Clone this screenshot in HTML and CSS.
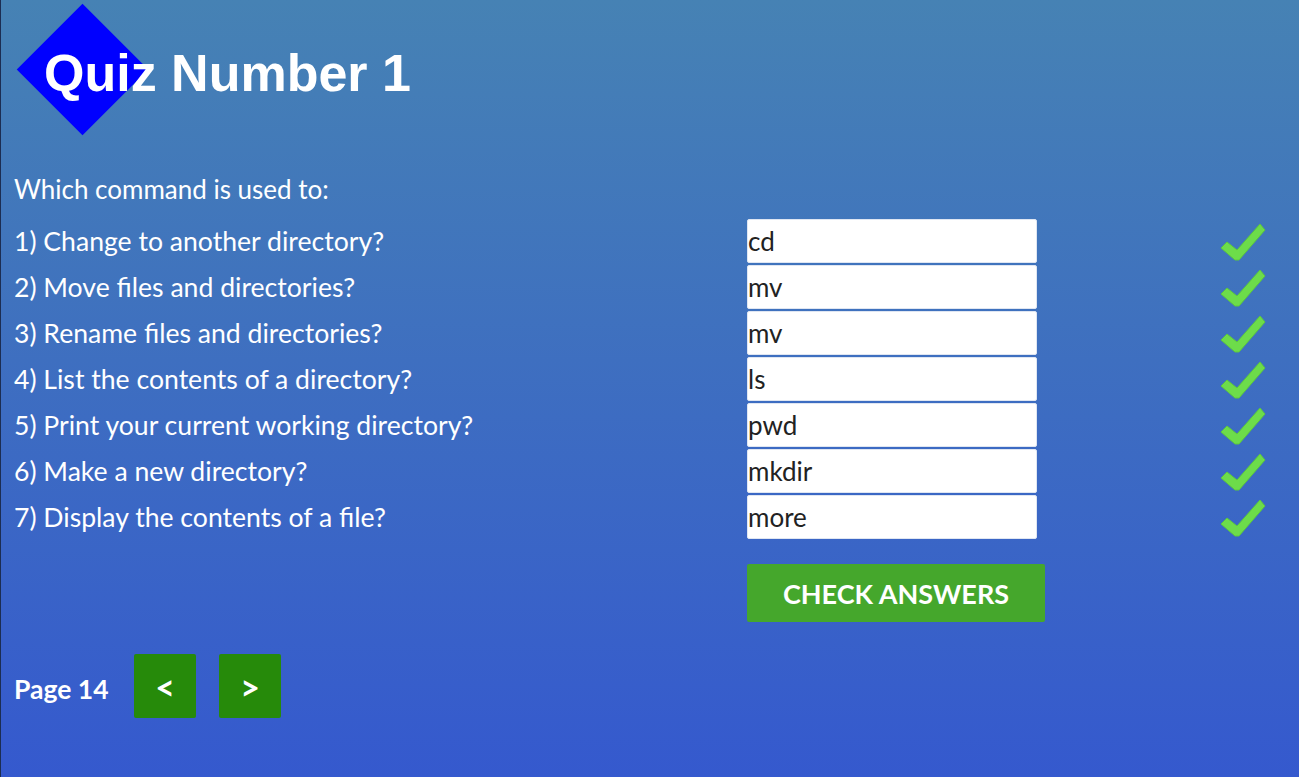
FILE: index.html
```html
<!DOCTYPE html>
<html lang="en">
<head>
<meta charset="utf-8">
<title>Quiz Number 1</title>
<link rel="stylesheet" href="styles.css">
</head>
<body>
<div class="page">
  <header class="header">
    <div class="diamond"></div>
    <h1 class="title">Quiz Number 1</h1>
  </header>

  <p class="intro">Which command is used to:</p>

  <div class="quiz">
    <div class="question">1) Change to another directory?</div>
    <input class="answer" type="text" value="cd">
    <svg class="tick" viewBox="0 0 48 42"><polygon points="2,27 8,21 18,29 41,3 46,9 20,39 16,39"/></svg>

    <div class="question">2) Move files and directories?</div>
    <input class="answer" type="text" value="mv">
    <svg class="tick" viewBox="0 0 48 42"><polygon points="2,27 8,21 18,29 41,3 46,9 20,39 16,39"/></svg>

    <div class="question">3) Rename files and directories?</div>
    <input class="answer" type="text" value="mv">
    <svg class="tick" viewBox="0 0 48 42"><polygon points="2,27 8,21 18,29 41,3 46,9 20,39 16,39"/></svg>

    <div class="question">4) List the contents of a directory?</div>
    <input class="answer" type="text" value="ls">
    <svg class="tick" viewBox="0 0 48 42"><polygon points="2,27 8,21 18,29 41,3 46,9 20,39 16,39"/></svg>

    <div class="question">5) Print your current working directory?</div>
    <input class="answer" type="text" value="pwd">
    <svg class="tick" viewBox="0 0 48 42"><polygon points="2,27 8,21 18,29 41,3 46,9 20,39 16,39"/></svg>

    <div class="question">6) Make a new directory?</div>
    <input class="answer" type="text" value="mkdir">
    <svg class="tick" viewBox="0 0 48 42"><polygon points="2,27 8,21 18,29 41,3 46,9 20,39 16,39"/></svg>

    <div class="question">7) Display the contents of a file?</div>
    <input class="answer" type="text" value="more">
    <svg class="tick" viewBox="0 0 48 42"><polygon points="2,27 8,21 18,29 41,3 46,9 20,39 16,39"/></svg>

    <div class="spacer"></div>
    <button class="check" type="button">CHECK ANSWERS</button>
  </div>

  <nav class="pager">
    <span class="page-label">Page 14</span>
    <button class="nav-btn" type="button">&lt;</button>
    <button class="nav-btn" type="button">&gt;</button>
  </nav>
</div>
</body>
</html>
```

FILE: styles.css
```css
html, body {
  margin: 0;
  padding: 0;
  height: 100%;
}

body {
  background: linear-gradient(to bottom, #4682b4 0%, #3559ce 100%);
  font-family: Lato, "Open Sans", sans-serif;
  color: #fff;
  overflow: hidden;
}

.page {
  min-height: 100%;
  box-sizing: border-box;
  border-left: 1px solid #1c2d52;
  padding: 0 0 0 13px;
}

.header {
  position: relative;
  height: 140px;
  display: flex;
  align-items: center;
  padding-left: 30px;
}

.diamond {
  position: absolute;
  left: 22px;
  top: 23px;
  width: 93px;
  height: 93px;
  background: #0000ff;
  transform: rotate(45deg);
}

.title {
  position: relative;
  margin: 0;
  padding-top: 6px;
  font-family: "Liberation Sans", Arial, sans-serif;
  font-weight: bold;
  font-size: 52px;
  color: #fff;
}

.intro {
  margin: 26px 0 0 0;
  height: 46px;
  line-height: 46px;
  font-size: 26px;
}

.quiz {
  margin-top: 7px;
  display: grid;
  grid-template-columns: 733px 290px 182px 48px;
  grid-auto-rows: 44px;
  row-gap: 2px;
  align-items: center;
}

.question {
  font-size: 26.6px;
  line-height: 44px;
}

.answer {
  box-sizing: border-box;
  width: 290px;
  height: 44px;
  margin: 0;
  padding: 0;
  border: 1px solid #dfe6f2;
  border-radius: 2px;
  background: #fff;
  font-family: Lato, "Open Sans", sans-serif;
  font-size: 26px;
  color: #222;
  outline: none;
}

.tick {
  grid-column: 4;
  width: 48px;
  height: 42px;
  align-self: start;
  margin-top: 2px;
}

.tick polygon {
  fill: #6ddc4a;
  stroke: #5cc83e;
  stroke-width: 1;
  stroke-linejoin: round;
}

.spacer {
  grid-column: 1;
}

.check {
  grid-column: 2 / span 2;
  justify-self: start;
  align-self: start;
  margin-top: 23px;
  width: 298px;
  height: 58px;
  border: none;
  border-radius: 2px;
  background: #45a72c;
  color: #fff;
  font-family: Lato, "Open Sans", sans-serif;
  font-weight: bold;
  font-size: 27px;
  cursor: pointer;
}

.pager {
  margin-top: 69px;
  display: flex;
  align-items: center;
}

.page-label {
  font-weight: bold;
  font-size: 26.5px;
  width: 120px;
  padding-top: 5px;
}

.nav-btn {
  width: 62px;
  height: 64px;
  margin-right: 23px;
  border: none;
  border-radius: 2px;
  background: #268a0a;
  color: #fff;
  font-family: Lato, "Open Sans", sans-serif;
  font-weight: bold;
  font-size: 34px;
  cursor: pointer;
}
```
